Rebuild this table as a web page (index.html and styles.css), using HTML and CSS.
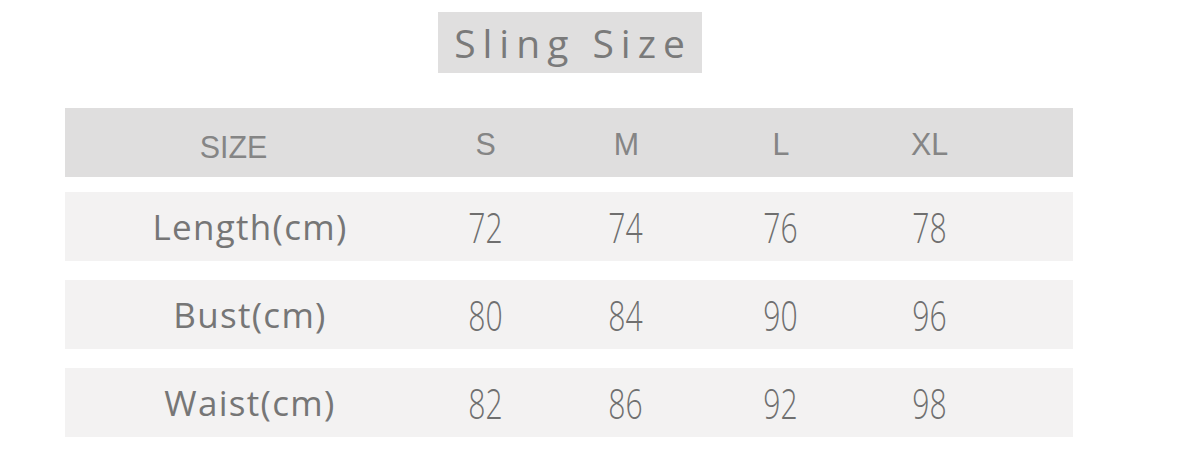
FILE: index.html
```html
<!DOCTYPE html>
<html>
<head>
<meta charset="utf-8">
<link rel="stylesheet" href="styles.css">
</head>
<body>
<div class="page">
  <div class="title-wrap"><h1 class="title">Sling Size</h1></div>
  <div class="table">
    <div class="row head">
      <div class="cell label"><span class="hd hd-first">SIZE</span></div>
      <div class="cell"><span class="hd">S</span></div>
      <div class="cell"><span class="hd">M</span></div>
      <div class="cell"><span class="hd">L</span></div>
      <div class="cell"><span class="hd">XL</span></div>
      <div class="cell"></div>
    </div>
    <div class="row">
      <div class="cell label">Length(cm)</div>
      <div class="cell"><span class="num">72</span></div>
      <div class="cell"><span class="num">74</span></div>
      <div class="cell"><span class="num">76</span></div>
      <div class="cell"><span class="num">78</span></div>
      <div class="cell"></div>
    </div>
    <div class="row">
      <div class="cell label">Bust(cm)</div>
      <div class="cell"><span class="num">80</span></div>
      <div class="cell"><span class="num">84</span></div>
      <div class="cell"><span class="num">90</span></div>
      <div class="cell"><span class="num">96</span></div>
      <div class="cell"></div>
    </div>
    <div class="row">
      <div class="cell label">Waist(cm)</div>
      <div class="cell"><span class="num">82</span></div>
      <div class="cell"><span class="num">86</span></div>
      <div class="cell"><span class="num">92</span></div>
      <div class="cell"><span class="num">98</span></div>
      <div class="cell"></div>
    </div>
  </div>
</div>
</body>
</html>
```
FILE: styles.css
```css
html, body {
  margin: 0;
  padding: 0;
  background: #ffffff;
}
body {
  width: 1200px;
  height: 459px;
  overflow: hidden;
  font-family: "Open Sans", "Noto Sans", sans-serif;
  color: #777777;
}
.page {
  padding-top: 12px;
  padding-left: 65px;
  width: 1008px;
}
.title-wrap {
  display: flex;
  justify-content: flex-start;
  padding-left: 373px;
}
.title {
  margin: 0;
  width: 264px;
  height: 61px;
  background: #e0dfdf;
  font-size: 39px;
  font-weight: 400;
  letter-spacing: 7px;
  color: #7a7a7a;
  display: flex;
  align-items: center;
  justify-content: center;
  padding-left: 6px;
  box-sizing: border-box;
}
.table {
  margin-top: 35px;
  display: flex;
  flex-direction: column;
  gap: 19px;
}
.row {
  display: grid;
  grid-template-columns: 370px 102px 178px 132px 166px 1fr;
  height: 69px;
  background: #f3f2f2;
  align-items: center;
}
.row.head {
  background: #dfdede;
  margin-bottom: -4px;
}
.cell {
  text-align: center;
}
.label {
  font-size: 35px;
  letter-spacing: 1.3px;
  color: #767676;
}
.hd {
  display: inline-block;
  font-family: "Liberation Sans", Arial, sans-serif;
  font-weight: 400;
  font-size: 32px;
  color: #858585;
  letter-spacing: 0;
  transform: translateY(2px) scaleX(0.95);
}
.hd-first {
  margin-right: 32px;
}
.num {
  display: inline-block;
  font-size: 43px;
  font-weight: 300;
  color: #6f6f6f;
  transform: scaleX(0.7);
}
```
